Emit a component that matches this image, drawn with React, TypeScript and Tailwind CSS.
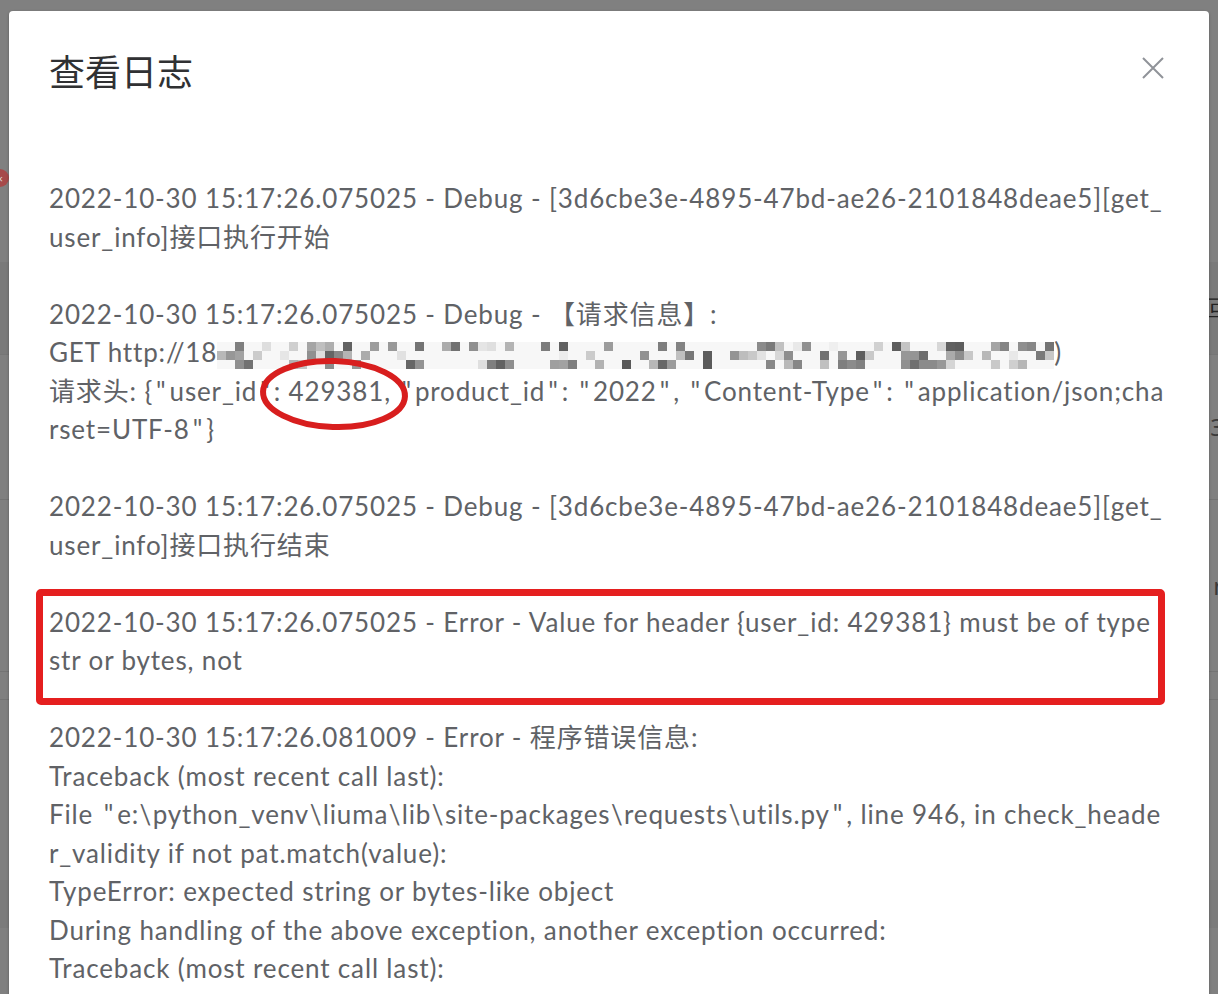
const logFont = {
  fontFamily: '"Lato", "Noto Sans CJK SC", sans-serif',
};

function Mosaic() {
  // deterministic pseudo-random pixel blocks for the redacted url
  let seed = 7;
  const rand = () => {
    seed = (seed * 9301 + 49297) % 233280;
    return seed / 233280;
  };
  const cell = 9;
  const cols = 93;
  const rows = 3;
  const blocks: { x: number; y: number; c: string }[] = [];
  for (let r = 0; r < rows; r++) {
    for (let c = 0; c < cols; c++) {
      const p = rand();
      if (p < 0.4) {
        const shade = Math.round(90 + rand() * 150);
        const hex = shade.toString(16).padStart(2, "0");
        blocks.push({ x: c * cell, y: r * cell, c: `#${hex}${hex}${hex}` });
      }
    }
  }
  return (
    <svg width={cols * cell} height={rows * cell} className="inline-block align-middle">
      <rect width={cols * cell} height={rows * cell} fill="#f7f7f7" />
      {blocks.map((b, i) => (
        <rect key={i} x={b.x} y={b.y} width={cell} height={cell} fill={b.c} />
      ))}
    </svg>
  );
}

// the original font sets quotes and backslashes wider than Lato does
function Wide({ text }: { text: string }) {
  const parts = text.split(/(["\\])/);
  return (
    <>
      {parts.map((p, i) =>
        p === '"' ? (
          <span key={i} className="mx-[3px]">"</span>
        ) : p === "\\" ? (
          <span key={i} className="mx-[0.5px]">\</span>
        ) : (
          p
        )
      )}
    </>
  );
}

function Line({ children }: { children: React.ReactNode }) {
  return <div className="whitespace-nowrap">{children}</div>;
}

export default function App() {
  return (
    <div className="relative h-[994px] w-[1218px] overflow-hidden bg-[#808080]">
      {/* page behind the mask */}
      <div className="flex flex-col">
        <div className="relative h-[262px]">
          <div className="absolute left-[-9px] top-[169px] flex h-[18px] w-[18px] items-center justify-center rounded-full bg-[#a64a4a] text-[11px] leading-none text-[#d8d8d8]">
            ×
          </div>
        </div>
        <div className="flex h-[93px] items-center justify-end border-b border-[#767676] bg-[#7a7a7a] pr-[2px] text-[24px] text-[#222]">
          <span className="translate-x-[12px]">回</span>
        </div>
        <div className="flex h-[145px] items-center justify-end border-b border-[#747474] text-[24px] text-[#3a3a3a]">
          <span className="translate-x-[6px]">3</span>
        </div>
        <div className="flex h-[172px] items-center justify-end border-b border-[#747474] text-[24px] text-[#3a3a3a]">
          <span className="translate-x-[10px]">n</span>
        </div>
        <div className="h-[28px] border-b border-[#747474]" />
        <div className="h-[180px]" />
        <div className="h-[48px] bg-[#7b7b7b]" />
      </div>

      {/* dialog */}
      <div className="absolute inset-0">
        <div className="ml-[9px] mt-[11px] w-[1200px] rounded-[4px] bg-white shadow-[0_1px_3px_rgba(0,0,0,0.3)]">
          <div className="flex items-start justify-between px-[40px] pb-[20px] pt-[40px]">
            <span
              className="-mt-[5px] mb-[5px] text-[36px] leading-[48px] text-[#303133]"
              style={{ fontFamily: '"Noto Sans CJK SC", sans-serif' }}
            >
              查看日志
            </span>
            <svg width="32" height="32" viewBox="0 0 32 32" className="mt-[1px]">
              <path d="M6 6 L26 26 M26 6 L6 26" stroke="#909399" strokeWidth="2" fill="none" />
            </svg>
          </div>

          <div
            className="flex flex-col gap-[38.5px] px-[40px] pb-[60px] pt-[60px] text-[26px] leading-[38.5px] tracking-[0.85px] text-[#606266]"
            style={logFont}
          >
            <div>
              <Line>2022-10-30 15:17:26.075025 - Debug - [3d6cbe3e-4895-47bd-ae26-2101848deae5][get_</Line>
              <Line>user_info]接口执行开始</Line>
            </div>

            <div className="relative">
              <Line>2022-10-30 15:17:26.075025 - Debug - 【请求信息】:</Line>
              <Line>
                GET http://18
                <Mosaic />
                )
              </Line>
              <Line>
                请求头: <Wide text={'{"user_id": 429381, "product_id": "2022", "Content-Type": "application/json;cha'} />
              </Line>
              <Line>
                <Wide text={'rset=UTF-8"}'} />
              </Line>
              <svg
                width="156"
                height="80"
                viewBox="0 0 156 80"
                className="absolute left-[207px] top-[59px]"
              >
                <ellipse
                  cx="78"
                  cy="40"
                  rx="71"
                  ry="33"
                  fill="none"
                  stroke="#d81e1e"
                  strokeWidth="6"
                  transform="rotate(2 78 40)"
                />
              </svg>
            </div>

            <div>
              <Line>2022-10-30 15:17:26.075025 - Debug - [3d6cbe3e-4895-47bd-ae26-2101848deae5][get_</Line>
              <Line>user_info]接口执行结束</Line>
            </div>

            <div className="relative">
              <Line>2022-10-30 15:17:26.075025 - Error - Value for header {'{user_id: 429381}'} must be of type</Line>
              <Line>str or bytes, not</Line>
              <div className="absolute left-[-13px] top-[-14px] h-[116px] w-[1129px] rounded-[5px] border-[7px] border-[#e51f1f]" />
            </div>

            <div>
              <Line>2022-10-30 15:17:26.081009 - Error - 程序错误信息:</Line>
              <Line>Traceback (most recent call last):</Line>
              <Line>
                <Wide text={'File "e:\\python_venv\\liuma\\lib\\site-packages\\requests\\utils.py", line 946, in check_heade'} />
              </Line>
              <Line>r_validity if not pat.match(value):</Line>
              <Line>TypeError: expected string or bytes-like object</Line>
              <Line>During handling of the above exception, another exception occurred:</Line>
              <Line>Traceback (most recent call last):</Line>
              <Line>
                <Wide text={'File "e:\\python_venv\\liuma\\lib\\site-packages\\requests\\sessions.py", line 573, in request'} />
              </Line>
            </div>
          </div>
        </div>
      </div>
    </div>
  );
}
